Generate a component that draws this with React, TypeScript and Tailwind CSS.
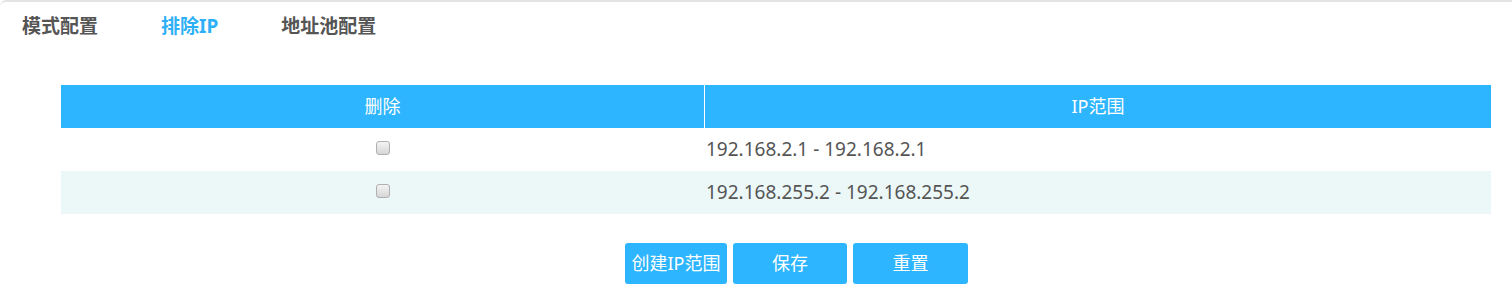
import { useState } from "react";

const font = {
  fontFamily: '"Noto Sans", "Noto Sans CJK SC", sans-serif',
};

const tabs = ["模式配置", "排除IP", "地址池配置"];

const ranges = [
  { id: 1, start: "192.168.2.1", end: "192.168.2.1" },
  { id: 2, start: "192.168.255.2", end: "192.168.255.2" },
];

export default function App() {
  const [active, setActive] = useState(1);
  const [checked, setChecked] = useState<Record<number, boolean>>({});

  return (
    <div
      className="h-[290px] w-[1512px] overflow-hidden rounded-tl-md border-t-2 border-[#e3e3e3] bg-white"
      style={font}
    >
      {/* tabs */}
      <div className="flex h-[48px] items-center gap-[63px] pl-[22px]">
        {tabs.map((tab, i) => (
          <button
            key={tab}
            type="button"
            onClick={() => setActive(i)}
            className={
              i === active
                ? "text-[19px] font-bold text-[#2db0f5]"
                : "text-[19px] font-bold text-[#555]"
            }
          >
            {tab}
          </button>
        ))}
      </div>

      {/* table */}
      <div className="ml-[61px] mt-[35px] w-[1430px]">
        <div className="flex h-[43px] bg-[#2db5ff] text-[18px] text-white">
          <div className="flex w-[644px] items-center justify-center border-r border-white">
            删除
          </div>
          <div className="flex flex-1 items-center justify-center">IP范围</div>
        </div>
        {ranges.map((r, i) => (
          <div
            key={r.id}
            className={
              i % 2 === 1
                ? "flex h-[43px] bg-[#ecf8f8] text-[19px] text-[#555]"
                : "flex h-[43px] bg-white text-[19px] text-[#555]"
            }
          >
            <div className="flex w-[645px] items-center justify-center pb-[4px] pr-[2px]">
              <input
                type="checkbox"
                checked={!!checked[r.id]}
                onChange={() => setChecked({ ...checked, [r.id]: !checked[r.id] })}
                className="h-[14px] w-[14px] appearance-none rounded-[3px] border border-[#b0b0b0] bg-gradient-to-b from-[#f4f4f4] to-[#d6d6d6]"
              />
            </div>
            <div className="flex flex-1 items-center">
              {r.start} - {r.end}
            </div>
          </div>
        ))}
      </div>

      {/* actions */}
      <div className="ml-[625px] mt-[29px] flex gap-[6px] text-[18px] text-white">
        <button type="button" className="h-[41px] w-[102px] rounded-[3px] bg-[#2db5ff]">
          创建IP范围
        </button>
        <button type="button" className="h-[41px] w-[114px] rounded-[3px] bg-[#2db5ff]">
          保存
        </button>
        <button type="button" className="h-[41px] w-[115px] rounded-[3px] bg-[#2db5ff]">
          重置
        </button>
      </div>
    </div>
  );
}
